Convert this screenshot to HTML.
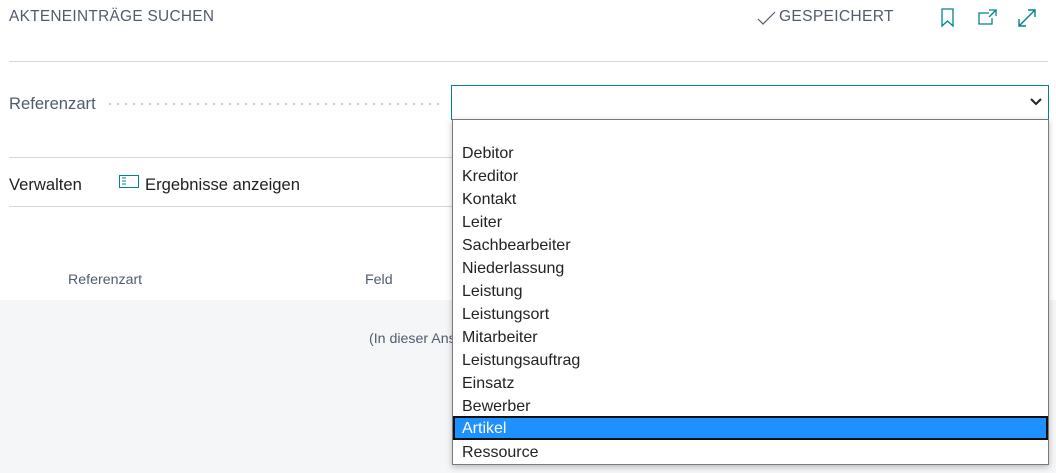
<!DOCTYPE html>
<html><head><meta charset="utf-8"><style>
*{margin:0;padding:0;box-sizing:border-box}
body{width:1056px;height:473px;background:#fff;position:relative;overflow:hidden;font-family:"Liberation Sans",sans-serif;color:#212121}
.a{position:absolute;white-space:nowrap}
.line{position:absolute;height:1px;background:#d6d6d6}
.dd{position:absolute;left:452px;top:119px;width:597px;height:346px;background:#fff;border:1px solid #7a7a7a;box-shadow:0 2px 6px rgba(0,0,0,.25)}
.it{position:absolute;left:9px;font-size:16px;color:#222;height:23px;line-height:23px}
</style></head><body>
<div class="a" style="left:9px;top:8px;font-size:15.4px;color:#505c6d;letter-spacing:.3px">AKTENEINTRÄGE SUCHEN</div>
<svg class="a" style="left:757px;top:10px" width="20" height="16"><path d="M1 9 L6 14 L18 2" stroke="#505c6d" fill="none" stroke-width="1.2"/></svg>
<div class="a" style="left:779px;top:8px;font-size:15.6px;color:#505c6d;letter-spacing:.3px">GESPEICHERT</div>
<svg class="a" style="left:940px;top:8px" width="16" height="20"><path d="M2 1 H13 V18 L7.5 13 L2 18 Z" stroke="#008489" fill="none" stroke-width="1.3"/></svg>
<svg class="a" style="left:977px;top:9px" width="22" height="16"><path d="M12 4 H2 V15 H15 V9 M12 1 H19 V7 M19 1 L12 8" stroke="#008489" fill="none" stroke-width="1.3"/></svg>
<svg class="a" style="left:1017px;top:8px" width="20" height="20"><path d="M2 18 L18 2 M2 11 V18 H9 M11 2 H18 V9" stroke="#008489" fill="none" stroke-width="1.4"/></svg>
<div class="line" style="left:9px;top:61px;width:1039px"></div>
<div class="a" style="left:9px;top:94px;font-size:16.6px;color:#505c6d">Referenzart</div>
<div class="a" style="left:106px;top:103px;width:337px;height:2px;background:radial-gradient(circle,#bbb 0.8px,transparent 1px) 0 0/8px 2px repeat-x"></div>
<div class="a" style="left:451px;top:85px;width:598px;height:35px;border:1px solid #008489"></div>
<svg class="a" style="left:1030px;top:98px" width="12" height="8"><path d="M1 1 L6 6 L11 1" stroke="#222" fill="none" stroke-width="2"/></svg>
<div class="line" style="left:9px;top:157px;width:443px"></div>
<div class="a" style="left:9px;top:175px;font-size:16.6px">Verwalten</div>
<svg class="a" style="left:119px;top:175px" width="20" height="14"><rect x="0.5" y="0.5" width="19" height="12" fill="none" stroke="#008489"/><path d="M3 3h4M3 6h4M3 9h4" stroke="#008489"/></svg>
<div class="a" style="left:145px;top:175px;font-size:16.6px">Ergebnisse anzeigen</div>
<div class="line" style="left:9px;top:206px;width:443px"></div>
<div class="a" style="left:68px;top:272px;font-size:14.2px;color:#505c6d">Referenzart</div>
<div class="a" style="left:365px;top:272px;font-size:14.2px;color:#505c6d">Feld</div>
<div class="a" style="left:0;top:300px;width:1056px;height:173px;background:#f5f6f8"></div>
<div class="a" style="left:369px;top:331px;font-size:14.2px;color:#505c6d">(In dieser Ansicht</div>
<div class="dd">
<div class="it" style="top:22px">Debitor</div>
<div class="it" style="top:45px">Kreditor</div>
<div class="it" style="top:68px">Kontakt</div>
<div class="it" style="top:91px">Leiter</div>
<div class="it" style="top:114px">Sachbearbeiter</div>
<div class="it" style="top:137px">Niederlassung</div>
<div class="it" style="top:160px">Leistung</div>
<div class="it" style="top:183px">Leistungsort</div>
<div class="it" style="top:206px">Mitarbeiter</div>
<div class="it" style="top:229px">Leistungsauftrag</div>
<div class="it" style="top:252px">Einsatz</div>
<div class="it" style="top:275px">Bewerber</div>
<div class="a" style="left:0;top:296px;width:595px;height:24px;background:#1e90ff;border:2px solid #111"></div>
<div class="it" style="top:297px;color:#fff">Artikel</div>
<div class="it" style="top:321px">Ressource</div>
</div>
</body></html>
